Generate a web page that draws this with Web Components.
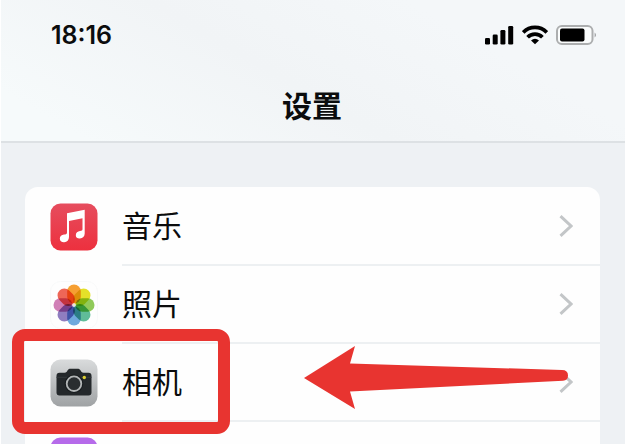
<!DOCTYPE html>
<html lang="zh-CN">
<head>
<meta charset="utf-8">
<meta name="viewport" content="width=device-width, initial-scale=1">
<title>设置</title>
<style>
  body { margin: 0; font-family: "Liberation Sans", "Noto Sans CJK SC", sans-serif; color: #0b0c0d; background: #eef1f4; }
</style>
</head>
<body>
<settings-page>
  <status-bar slot="header">18:16</status-bar>
  <nav-title slot="header">设置</nav-title>
  <settings-row><music-icon slot="icon"></music-icon>音乐</settings-row>
  <settings-row><photos-icon slot="icon"></photos-icon>照片</settings-row>
  <settings-row><camera-icon slot="icon"></camera-icon>相机<callout-mark slot="mark"></callout-mark></settings-row>
  <settings-row><purple-icon slot="icon"></purple-icon></settings-row>
</settings-page>

<script>
const define = (name, html) => {
  const template = document.createElement('template');
  template.innerHTML = html;
  customElements.define(name, class extends HTMLElement {
    constructor() {
      super();
      this.attachShadow({ mode: 'open' }).append(template.content.cloneNode(true));
    }
  });
};

define('settings-page', `
  <style>
    :host { display: block; box-sizing: border-box; height: 100vh; overflow: hidden; border-left: 1px solid #fff; }
    header { background: linear-gradient(30deg, #f6fafb 10%, #f1f4f6 45%, #f4f7f9 75%); border-bottom: 2px solid #dde1e4; padding: 20px 28px 17px 50px; }
    main { padding: 44px 25px 0 24px; }
    section { background: #fefefe; border-radius: 13px; padding-top: 1px; }
  </style>
  <header><slot name="header"></slot></header>
  <main><section><slot></slot></section></main>`);

define('status-bar', `
  <style>
    :host { display: flex; align-items: center; justify-content: space-between; height: 30px; font: 600 25px/30px Inter, "Liberation Sans", sans-serif; }
    div { display: flex; align-items: center; gap: 8px; }
    svg { display: block; }
  </style>
  <time><slot></slot></time>
  <div>
    <svg width="29" height="20" viewBox="0 0 29 20" fill="#000">
      <rect y="13" width="5" height="6.500" rx="1.300"/><rect x="7.700" y="9.500" width="5" height="10" rx="1.300"/><rect x="15.400" y="5" width="5" height="14.500" rx="1.300"/><rect x="23.200" y="1" width="5" height="18.500" rx="1.300"/>
    </svg>
    <svg width="26" height="20" viewBox="0 0 26 20" fill="none" stroke="#000" stroke-width="3.700">
      <path d="M1.200 7.400C7.700.700 18.300.700 24.800 7.400"/><path d="M5.600 12.200C9.600 8 16.400 8 20.400 12.200"/><path d="M13 19.300L9 15.400Q13 12 17 15.400Z" fill="#000" stroke="none"/>
    </svg>
    <svg width="41" height="20" viewBox="0 0 41 20">
      <rect x="1" y="1" width="35.500" height="18" rx="4.800" fill="#fafcfc" stroke="#acaeaf" stroke-width="2"/><rect x="4" y="3.500" width="24.500" height="13" rx="2" fill="#000"/><path d="M38.700 7.500Q41 10 38.700 12.500Z" fill="#8d8f90"/>
    </svg>
  </div>`);

define('nav-title', `
  <style>
    :host { display: block; margin: 34px 0 0; }
    h1 { margin: 0 0 0 -24px; text-align: center; font: 700 30px/40px "Noto Sans CJK SC", sans-serif; }
  </style>
  <h1><slot></slot></h1>`);

define('settings-row', `
  <style>
    :host { display: block; position: relative; }
    a { display: flex; align-items: stretch; height: 78px; padding-left: 25px; gap: 24px; color: inherit; text-decoration: none; }
    .icon { display: flex; align-items: center; width: 48px; flex: none; }
    .body { flex: 1; display: flex; align-items: center; justify-content: space-between; box-sizing: border-box; border-bottom: 2px solid #edf0f2; padding-right: 27px; font: 400 30px/40px "Noto Sans CJK SC", sans-serif; }
    .label { padding-bottom: 4px; }
    svg { display: block; }
  </style>
  <a href="#">
    <span class="icon"><slot name="icon"></slot></span>
    <span class="body"><span class="label"><slot></slot></span>
      <svg width="14" height="24" viewBox="0 0 14 24" fill="none" stroke="#c3c6c8" stroke-width="3"><path d="M1.500 2.200L12 12L1.500 21.800"/></svg>
    </span>
  </a>
  <slot name="mark"></slot>`);

const iconStyle = '<style>:host, svg { display: block; }</style>';

define('music-icon', `${iconStyle}
  <svg width="48" height="48" viewBox="0 0 48 48">
    <defs><linearGradient id="g" x2="0" y2="1"><stop stop-color="#e64d5e"/><stop offset="1" stop-color="#ed303e"/></linearGradient></defs>
    <rect x=".5" y=".5" width="47" height="47" rx="10" fill="url(#g)"/>
    <path d="M17 10.300L34.700 6.800V30.500C34.700 33.500 32.700 35.300 30 35.500C27.600 35.700 25.800 34.400 25.800 32.200C25.800 29.800 27.600 28.500 30 28.100C31.700 27.800 32.500 27.500 32.500 26V15.200L19 17.900V34C19 37 17 39 14.300 39.200C11.700 39.400 9.800 38 9.800 35.700C9.800 33.200 11.600 32 14 31.600C16 31.200 17 30.800 17 29.400Z" fill="#fff"/>
  </svg>`);

const petals = ['#f79a25', '#e3df1c', '#8ac850', '#56b994', '#65a5dc', '#8975bd', '#ce78b2', '#ee5c4d'];
define('photos-icon', `${iconStyle}
  <style>rect.petal { mix-blend-mode: multiply; } svg { isolation: isolate; }</style>
  <svg width="48" height="48" viewBox="0 0 48 48">
    <rect x=".5" y=".5" width="47" height="47" rx="10" fill="#fefefe" stroke="#f8f9f9"/>
    ${petals.map((c, i) => `<rect class="petal" x="17.200" y="3.500" width="13.600" height="19" rx="6.800" fill="${c}" fill-opacity=".94" transform="rotate(${i * 45} 24 24)"/>`).join('')}
    <circle cx="24" cy="24" r="1.500" fill="#e9e6dc"/>
  </svg>`);

define('camera-icon', `${iconStyle}
  <svg width="48" height="48" viewBox="0 0 48 48">
    <defs><linearGradient id="g" x2="0" y2="1"><stop stop-color="#d9dbdc"/><stop offset="1" stop-color="#9fa2a4"/></linearGradient></defs>
    <rect x=".5" y=".5" width="47" height="47" rx="10" fill="url(#g)"/>
    <path d="M9.500 13.700H14.500C16.500 13.700 16.700 12.700 17.800 11C18.600 9.900 19.200 9.700 20.500 9.700H27.500C28.800 9.700 29.500 9.900 30.300 11C31.500 12.700 31.600 13.700 33.600 13.700H38.500Q41.500 13.700 41.500 16.700V33.500Q41.500 36.500 38.500 36.500H9.500Q6.500 36.500 6.500 33.500V16.700Q6.500 13.700 9.500 13.700Z" fill="#24282b"/>
    <path d="M6.500 18.300H41.500" stroke="#35393c"/>
    <circle cx="24" cy="24.700" r="9.300" fill="#181c1f"/><circle cx="24" cy="24.700" r="7.300" fill="#292d30" stroke="#b2b5b6" stroke-width="1.800"/>
    <circle cx="34.300" cy="18.500" r="1.700" fill="#ddcf32"/>
  </svg>`);

define('purple-icon', `${iconStyle}
  <svg width="48" height="48" viewBox="0 0 48 48"><rect x=".5" y=".5" width="47" height="47" rx="10" fill="#b66bea"/></svg>`);

/* Annotation laid over a row: a frame round its label and an arrow towards it. */
define('callout-mark', `
  <style>
    :host { position: absolute; inset: 0; pointer-events: none; }
    .frame { position: absolute; box-sizing: border-box; left: -13px; top: -15px; bottom: -12px; width: 218px; border: 12px solid #e83430; border-radius: 13px; }
    svg { position: absolute; right: 31px; top: 2px; }
  </style>
  <div class="frame"></div>
  <svg width="266" height="64" viewBox="0 0 266 64"><path d="M1 32L52 0L47 17.500L259 24Q265 24 265 29.500Q265 34.500 260 34.800L47 45.500L52 63Z" fill="#e83430"/></svg>`);
</script>
</body>
</html>
